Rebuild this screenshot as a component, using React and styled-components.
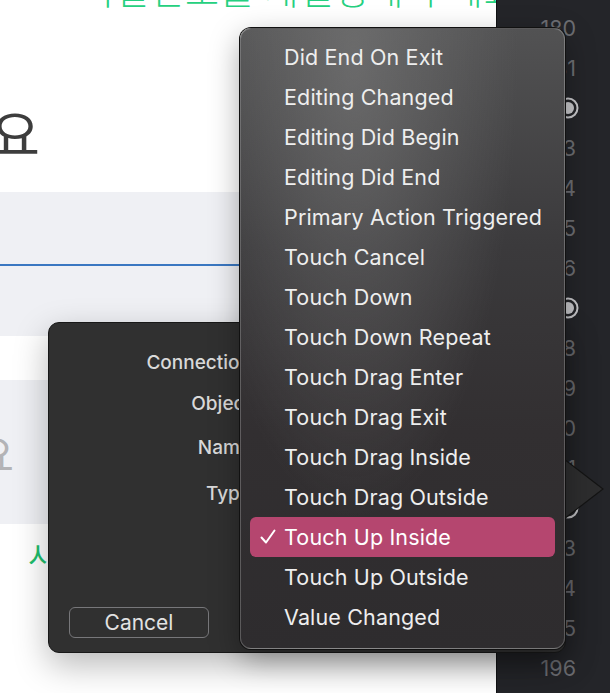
import React from "react";
import styled, { createGlobalStyle } from "styled-components";

const events = [
  "Did End On Exit",
  "Editing Changed",
  "Editing Did Begin",
  "Editing Did End",
  "Primary Action Triggered",
  "Touch Cancel",
  "Touch Down",
  "Touch Down Repeat",
  "Touch Drag Enter",
  "Touch Drag Exit",
  "Touch Drag Inside",
  "Touch Drag Outside",
  "Touch Up Inside",
  "Touch Up Outside",
  "Value Changed",
];

const labels = [
  { text: "Connection", h: 41 },
  { text: "Object", h: 44 },
  { text: "Name", h: 46 },
  { text: "Type", h: 46 },
];

// 182, 187, 192 show the outlet circle instead of a number
const lines = Array.from({ length: 17 }, (_, i) => 180 + i);
const dots = [182, 187, 192];

function App() {
  return (
    <>
      <GlobalStyle />
      <Screen>
        <Simulator>
          <Banner>
            <BannerText>비밀번호를 재설정해 주세요!</BannerText>
          </Banner>
          <TitleRow>
            <Title>주세요</Title>
          </TitleRow>
          <FieldGroup gap={29}>
            <Field focused />
            <Field />
          </FieldGroup>
          <FieldGroup gap={44}>
            <Placeholder>
              <span>입력해 주세요</span>
            </Placeholder>
          </FieldGroup>
          <LinkText>시작하기</LinkText>
        </Simulator>
        <Gutter>
          {lines.map((n) => (
            <LineNo key={n}>
              {dots.includes(n) ? (
                <svg width="24" height="24" viewBox="0 0 24 24">
                  <circle cx="12" cy="12" r="9.5" fill="none" stroke="#c9c9cc" strokeWidth="2" />
                  <circle cx="12" cy="12" r="6" fill="#c9c9cc" />
                </svg>
              ) : (
                n
              )}
            </LineNo>
          ))}
        </Gutter>

        <Popover>
          <Labels>
            {labels.map((l) => (
              <Label key={l.text} h={l.h}>
                {l.text}
              </Label>
            ))}
          </Labels>
          <Footer>
            <CancelBtn>Cancel</CancelBtn>
          </Footer>
          <Arrow width="42" height="62" viewBox="0 0 42 62">
            <path d="M1 1 L40 31 L1 61 Z" fill="#2d2d2e" stroke="#141414" strokeWidth="1.2" />
          </Arrow>
        </Popover>

        <Menu>
          {events.map((e) => {
            const sel = e === "Touch Up Inside";
            return (
              <Item key={e} selected={sel}>
                <Check>
                  {sel && (
                    <svg width="16" height="16" viewBox="0 0 16 16">
                      <path
                        d="M1.5 8.5 L6 13.5 L14.5 1.5"
                        fill="none"
                        stroke="#fff"
                        strokeWidth="2"
                        strokeLinecap="round"
                        strokeLinejoin="round"
                      />
                    </svg>
                  )}
                </Check>
                {e}
              </Item>
            );
          })}
        </Menu>
      </Screen>
    </>
  );
}

export default App;

const GlobalStyle = createGlobalStyle`
  html, body {
    margin: 0;
    padding: 0;
    overflow: hidden;
    background: #ffffff;
  }
  body {
    font-family: Inter, "Noto Sans", "Noto Sans CJK KR", sans-serif;
  }
`;

const Screen = styled.div`
  position: relative;
  display: flex;
  width: 610px;
  height: 693px;
  overflow: hidden;
`;

const Simulator = styled.div`
  width: 496px;
  height: 100%;
  background: #ffffff;
  display: flex;
  flex-direction: column;
  overflow: hidden;
  border-right: 1px solid #111214;
`;

const Banner = styled.div`
  height: 10px;
  padding-left: 80px;
  overflow: visible;
`;

const BannerText = styled.p`
  margin: -38px 0 0;
  font-family: "Noto Sans CJK KR", sans-serif;
  font-size: 37px;
  font-weight: 300;
  letter-spacing: 1px;
  color: #25d080;
  white-space: nowrap;
`;

const TitleRow = styled.div`
  width: 40px;
  height: 60px;
  margin-top: 93px;
  display: flex;
  justify-content: flex-end;
`;

const Title = styled.h1`
  margin: 0;
  font-family: "Noto Sans CJK KR", sans-serif;
  font-size: 54px;
  font-weight: 400;
  line-height: 60px;
  color: #3d3d3d;
  white-space: nowrap;
`;

const FieldGroup = styled.div`
  flex-shrink: 0;
  background: #eff0f4;
  height: 144px;
  margin-top: ${(p) => p.gap}px;
  display: flex;
  flex-direction: column;
`;

const Field = styled.div`
  height: ${(p) => (p.focused ? "72px" : "70px")};
  border-bottom: ${(p) => (p.focused ? "2px solid #3a77c1" : "none")};
`;

const Placeholder = styled.div`
  width: 14px;
  height: 144px;
  display: flex;
  justify-content: flex-end;
  align-items: center;
  span {
    font-family: "Noto Sans CJK KR", sans-serif;
    font-size: 42px;
    color: #b3b3b6;
    white-space: nowrap;
  }
`;

const LinkText = styled.p`
  margin: 8px 0 0 28px;
  font-family: "Noto Sans CJK KR", sans-serif;
  font-size: 30px;
  color: #1ebe6c;
`;

const Gutter = styled.div`
  flex: 1;
  background: #242529;
  padding-top: 8px;
  padding-right: 34px;
  display: flex;
  flex-direction: column;
  align-items: flex-end;
`;

const LineNo = styled.div`
  height: 40px;
  display: flex;
  align-items: center;
  font-family: Inter, "Liberation Sans", sans-serif;
  font-size: 21.5px;
  color: #6d6e73;
  svg {
    margin-right: -4px;
  }
`;

const Popover = styled.div`
  position: absolute;
  left: 48px;
  top: 322px;
  width: 518px;
  height: 331px;
  box-sizing: border-box;
  background: #303030;
  border: 1px solid #181818;
  border-radius: 11px;
  box-shadow: 0 12px 34px rgba(0, 0, 0, 0.28);
  display: flex;
  flex-direction: column;
  justify-content: space-between;
`;

const Labels = styled.div`
  width: 202px;
  padding-top: 28px;
  display: flex;
  flex-direction: column;
`;

const Label = styled.div`
  height: ${(p) => p.h}px;
  display: flex;
  align-items: flex-start;
  justify-content: flex-end;
  font-size: 19px;
  font-weight: 500;
  color: #d9d9d9;
`;

const Footer = styled.div`
  padding: 0 0 14px 20px;
`;

const CancelBtn = styled.button`
  width: 140px;
  height: 31px;
  background: transparent;
  border: 1.5px solid #77777a;
  border-radius: 6px;
  font-family: Inter, sans-serif;
  font-size: 21px;
  color: #e2e2e2;
  padding: 0;
`;

const Arrow = styled.svg`
  position: absolute;
  right: -40px;
  top: 135px;
`;

const Menu = styled.div`
  position: absolute;
  left: 240px;
  top: 28px;
  width: 325px;
  box-sizing: border-box;
  padding: 8px 9px 11px;
  border-radius: 11px;
  border: 1px solid rgba(255, 255, 255, 0.22);
  box-shadow: 0 0 0 1px #111, 0 10px 30px rgba(0, 0, 0, 0.35);
  background:
    radial-gradient(ellipse at 35% 5%, rgba(125, 125, 125, 0.6), rgba(80, 80, 80, 0) 55%),
    linear-gradient(180deg, #525253 0%, #3b3a3c 35%, #322f31 65%, #2e2c2e 100%);
`;

const Item = styled.div`
  height: 40px;
  display: flex;
  align-items: center;
  border-radius: 6px;
  font-size: 21.5px;
  letter-spacing: 0.15px;
  background: ${(p) => (p.selected ? "#b5466f" : "transparent")};
  color: ${(p) => (p.selected ? "#ffffff" : "#eeeeee")};
`;

const Check = styled.span`
  width: 34px;
  display: flex;
  justify-content: center;
  padding-left: 2px;
  box-sizing: border-box;
`;
